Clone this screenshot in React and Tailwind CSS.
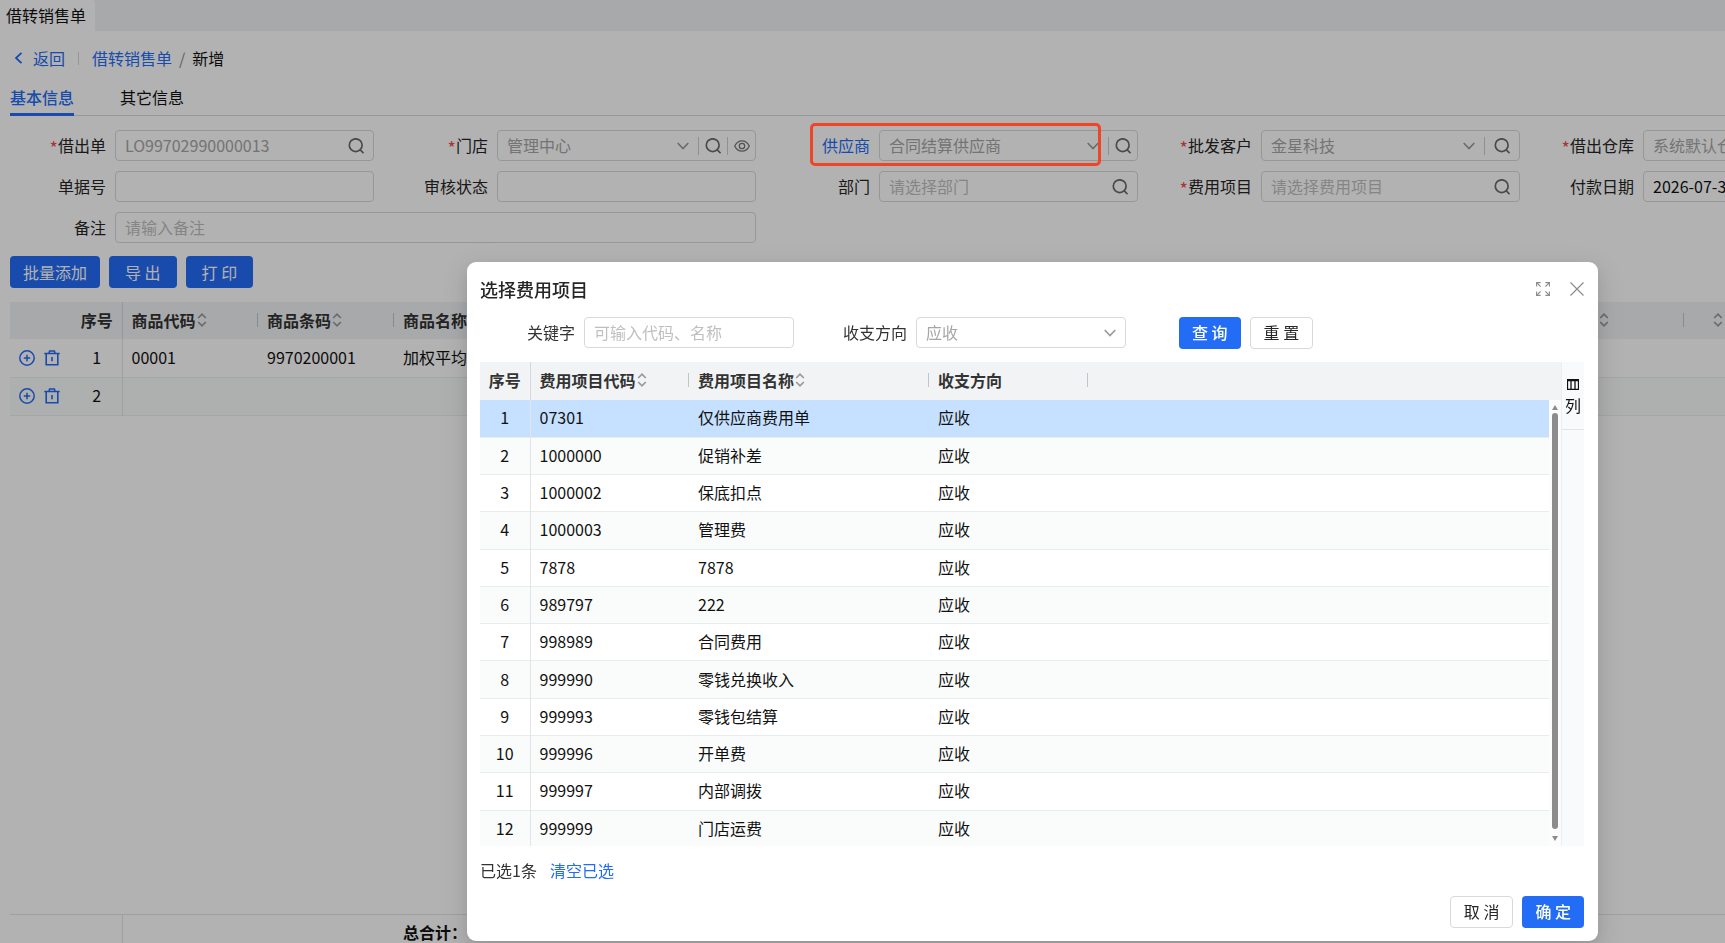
import React, { useState } from "react";

const feeItems = [
  { code: "07301", name: "仅供应商费用单" },
  { code: "1000000", name: "促销补差" },
  { code: "1000002", name: "保底扣点" },
  { code: "1000003", name: "管理费" },
  { code: "7878", name: "7878" },
  { code: "989797", name: "222" },
  { code: "998989", name: "合同费用" },
  { code: "999990", name: "零钱兑换收入" },
  { code: "999993", name: "零钱包结算" },
  { code: "999996", name: "开单费" },
  { code: "999997", name: "内部调拨" },
  { code: "999999", name: "门店运费" },
];

const goods = [
  { code: "00001", barcode: "9970200001", name: "加权平均" },
  { code: "", barcode: "", name: "" },
];

function SearchIcon() {
  return (
    <svg width="16" height="16" viewBox="0 0 16 16" fill="none" stroke="#6b6b6b" strokeWidth="1.7" className="shrink-0">
      <circle cx="7.7" cy="7.2" r="6.4" />
      <path d="M12 11.6L15.6 15.2" />
    </svg>
  );
}

function EyeIcon() {
  return (
    <svg width="16" height="16" viewBox="0 0 16 16" fill="none" stroke="#777777" strokeWidth="1.3" className="shrink-0">
      <path d="M0.7 8C2.3 4.6 4.9 2.8 8 2.8S13.7 4.6 15.3 8C13.7 11.4 11.1 13.2 8 13.2S2.3 11.4 0.7 8Z" />
      <circle cx="8" cy="8" r="2.7" />
    </svg>
  );
}

function DownIcon() {
  return (
    <svg width="12" height="8" viewBox="0 0 12 8" fill="none" stroke="#999999" strokeWidth="1.6" className="shrink-0">
      <path d="M0.7 1L6 6.6L11.3 1" />
    </svg>
  );
}

function SortIcon() {
  return (
    <svg width="10" height="14" viewBox="0 0 10 14" fill="none" stroke="#999999" strokeWidth="1.7" className="ml-px shrink-0">
      <path d="M1.2 5L5 1.2L8.8 5M1.2 9L5 12.8L8.8 9" />
    </svg>
  );
}

function Divider() {
  return <span className="h-[18px] w-px shrink-0 bg-[#cfcfcf]" />;
}

function Field({ id, label, required, active, className = "", children }) {
  return (
    <div className={`relative flex h-[31px] items-center pr-2 ${className}`}>
      <label
        htmlFor={id}
        className={`mr-[9px] flex w-[106px] shrink-0 justify-end pb-[2px] whitespace-nowrap ${active ? "text-[#236cf6]" : "text-[#262626]"}`}
      >
        {required && <span className="pt-1 text-[18px] leading-5 text-[#f5484d]">*</span>}
        {label}
      </label>
      {children}
    </div>
  );
}

const boxClass = "flex h-full min-w-0 flex-1 items-center rounded-[4px] border border-[#d9d9d9] pl-[9px]";
const inputClass = "h-full w-0 min-w-0 flex-1 bg-transparent pb-[2px] text-[#a6a6a6] outline-none placeholder:text-[#bfbfbf]";
const selectClass = "h-full w-0 min-w-0 flex-1 appearance-none bg-transparent pb-[2px] text-[#a6a6a6] outline-none";

function HeadCell({ text, sortable, separator = true, className = "pl-[9px]" }) {
  return (
    <th className="p-0 pb-[2px] text-left font-bold text-[#333333]">
      <div className="flex items-center justify-between">
        <span className={`flex items-center whitespace-nowrap ${className}`}>
          {text}
          {sortable && <SortIcon />}
        </span>
        {separator && <span className="h-[14px] w-px bg-[#c3c6d0]" />}
      </div>
    </th>
  );
}

function RowActions() {
  return (
    <div className="flex items-center gap-[9px] pl-[9px]">
      <button aria-label="添加行">
        <svg width="16" height="16" viewBox="0 0 16 16" fill="none" stroke="#236cf6" strokeWidth="1.5">
          <circle cx="8" cy="8" r="7.2" />
          <path d="M8 4.8V11.2M4.8 8H11.2" />
        </svg>
      </button>
      <button aria-label="删除行">
        <svg width="16" height="16" viewBox="0 0 16 16" fill="none" stroke="#236cf6" strokeWidth="1.6">
          <path d="M0.3 3.5H15.7M2.2 3.5V14.8H13.8V3.5M5 3.2L5.6 1H10.4L11 3.2M8 7V11.3" />
        </svg>
      </button>
    </div>
  );
}

function FeeItemModal() {
  const [keyword, setKeyword] = useState("");
  const [selected, setSelected] = useState(0);

  return (
    <div className="fixed inset-0 z-10 overflow-hidden bg-black/30 pt-[262px] pr-[127px] pl-[467px]">
      <div
        role="dialog"
        aria-label="选择费用项目"
        className="rounded-[9px] bg-white pr-[14px] pb-[13px] pl-[13px] shadow-[0_6px_16px_0_rgba(0,0,0,0.08),0_3px_6px_-4px_rgba(0,0,0,0.12),0_9px_28px_8px_rgba(0,0,0,0.08)]"
      >
        <div className="flex h-[55px] items-center justify-between pb-[2px]">
          <h2 className="text-[18px] font-medium text-[#262626]">选择费用项目</h2>
          <div className="flex items-center gap-5">
            <button aria-label="全屏">
              <svg width="14" height="14" viewBox="0 0 14 14" fill="none" stroke="#8c8c8c" strokeWidth="1.1">
                <path d="M0.6 4.6V0.6H4.6M9.4 0.6H13.4V4.6M13.4 9.4V13.4H9.4M4.6 13.4H0.6V9.4" />
                <path d="M1 1L4.6 4.6M13 1L9.4 4.6M13 13L9.4 9.4M1 13L4.6 9.4" />
              </svg>
            </button>
            <button aria-label="关闭">
              <svg width="14" height="14" viewBox="0 0 14 14" fill="none" stroke="#8c8c8c" strokeWidth="1.2">
                <path d="M0.5 0.5L13.5 13.5M13.5 0.5L0.5 13.5" />
              </svg>
            </button>
          </div>
        </div>

        {/* Filter */}
        <div className="flex h-[31px] items-center text-[#333333]">
          <label htmlFor="keyword" className="w-[104px] pr-[9px] pb-[2px] text-right">关键字</label>
          <input
            id="keyword"
            value={keyword}
            onChange={(e) => setKeyword(e.target.value)}
            placeholder="可输入代码、名称"
            className="h-full w-[210px] rounded-[4px] border border-[#d9d9d9] px-[9px] pb-[2px] outline-none placeholder:text-[#bfbfbf]"
          />
          <label htmlFor="direction" className="w-[122px] pr-[9px] pb-[2px] text-right">收支方向</label>
          <div className="flex h-full w-[210px] items-center rounded-[4px] border border-[#d9d9d9] pr-[9px] pl-[9px]">
            <select id="direction" className={selectClass}>
              <option>应收</option>
            </select>
            <DownIcon />
          </div>
          <button className="ml-[53px] h-8 rounded-[4px] bg-[#236cf6] px-[13px] pb-px font-medium text-white">查 询</button>
          <button className="ml-[9px] h-8 rounded-[4px] border border-[#d9d9d9] px-[13px] pb-px text-[#262626]">重 置</button>
        </div>

        {/* Fee item table */}
        <div className="mt-[14px] flex">
          <div className="relative h-[484px] min-w-0 flex-1 overflow-hidden">
            <table className="h-[486px] w-full table-fixed border-collapse">
              <colgroup>
                <col className="w-[50px]" />
                <col className="w-[159px]" />
                <col className="w-[240px]" />
                <col className="w-[159px]" />
                <col />
              </colgroup>
              <thead>
                <tr className="h-[38px] bg-[#f1f3f5]">
                  <th className="border-r border-[#d5d8de] p-0 pb-[2px] font-bold text-[#333333]">序号</th>
                  <HeadCell text="费用项目代码" sortable />
                  <HeadCell text="费用项目名称" sortable />
                  <HeadCell text="收支方向" />
                  <th />
                </tr>
              </thead>
              <tbody>
                {feeItems.map((item, index) => (
                  <tr
                    key={item.code}
                    onClick={() => setSelected(index)}
                    className={`h-[37px] border-b border-[#e9ecec] ${
                      selected === index ? "bg-[#c6e1ff]" : index % 2 === 1 ? "bg-[#fafcfb]" : "bg-white"
                    }`}
                  >
                    <td className="border-r border-[#e2e4e8] p-0 pb-[2px] text-center">{index + 1}</td>
                    <td className="p-0 pb-[2px] pl-[9px]">{item.code}</td>
                    <td className="p-0 pb-[2px] pl-[9px]">{item.name}</td>
                    <td className="p-0 pb-[2px] pl-[9px]">应收</td>
                    <td />
                  </tr>
                ))}
              </tbody>
            </table>
            {/* Scrollbar */}
            <div className="absolute top-[38px] right-0 bottom-0 flex w-3 flex-col items-center bg-[#fcfcfc] py-[5px]">
              <svg width="6" height="5" viewBox="0 0 6 5" fill="#8c8c8c">
                <path d="M3 0L6 5H0Z" />
              </svg>
              <div className="mt-[3px] w-[6px] flex-1 rounded-full bg-[#8c8c8c]" />
              <svg width="6" height="5" viewBox="0 0 6 5" fill="#8c8c8c" className="mt-[7px]">
                <path d="M3 5L6 0H0Z" />
              </svg>
            </div>
          </div>
          <div className="w-[23px] border-l border-[#eceef1] bg-[#f9fafc]">
            <button className="flex h-[68px] w-full flex-col items-center border-b border-[#e2e4e8] pt-[17px] leading-5">
              <svg width="12" height="11" viewBox="0 0 12 11" fill="none" stroke="#111111">
                <path d="M0.5 0.5H11.5V10.5H0.5ZM0 1.5H12M4 1V10.5M8 1V10.5" strokeWidth="1.3" />
              </svg>
              <span className="mt-[5px]">列</span>
            </button>
          </div>
        </div>

        <div className="flex h-[50px] items-center gap-[13px] pb-[2px] text-[#333333]">
          <span>已选1条</span>
          <button className="text-[#236cf6]">清空已选</button>
        </div>

        <div className="flex justify-end gap-[9px]">
          <button className="h-8 rounded-[4px] border border-[#d9d9d9] px-[13px] pb-[2px] text-[#262626]">取 消</button>
          <button className="h-8 rounded-[4px] bg-[#236cf6] px-[13px] pb-[2px] font-medium text-white">确 定</button>
        </div>
      </div>
    </div>
  );
}

function App() {
  return (
    <div className="flex h-screen flex-col overflow-hidden bg-white font-['Noto_Sans_CJK_SC',sans-serif] text-[16px] leading-6 text-[#111111]">
      {/* Window tabs */}
      <div className="flex h-[31px] shrink-0 bg-[#f1f3f5]">
        <div className="flex items-center rounded-tr-[3px] bg-white pr-[9px] pb-[2px] pl-[6px]">借转销售单</div>
      </div>

      {/* Breadcrumb */}
      <nav className="flex h-[54px] shrink-0 items-center pl-[14px]">
        <a href="#back" className="flex items-center gap-[10px] text-[#236cf6]">
          <svg width="9" height="12" viewBox="0 0 9 12" fill="none" stroke="currentColor" strokeWidth="1.8">
            <path d="M7.5 0.8L2 6L7.5 11.2" />
          </svg>
          返回
        </a>
        <span className="mx-[13px] h-[13px] w-px bg-[#d9d9d9]" />
        <a href="#list" className="text-[#236cf6]">借转销售单</a>
        <span className="mx-[7px] text-[#8c8c8c]">/</span>
        <span>新增</span>
      </nav>

      <div className="ml-[10px] flex h-[31px] shrink-0 gap-[46px] border-b border-[#d9d9d9]">
        <button className="h-[31px] border-b-[3px] border-[#236cf6] pb-1 font-medium text-[#236cf6]">基本信息</button>
        <button className="h-[31px] border-b-[3px] border-transparent pb-1">其它信息</button>
      </div>

      {/* Form */}
      <form className="mt-[14px] grid min-w-[1910px] shrink-0 grid-cols-5 gap-y-[10px]">
        <Field id="loan" label="借出单" required>
          <div className={`${boxClass} pr-[9px]`}>
            <input id="loan" readOnly value="LO99702990000013" className={inputClass} />
            <SearchIcon />
          </div>
        </Field>
        <Field id="store" label="门店" required>
          <div className={`${boxClass} pr-[5px]`}>
            <select id="store" className={selectClass}>
              <option>管理中心</option>
            </select>
            <div className="flex items-center gap-[6px]">
              <span className="mr-[3px] flex"><DownIcon /></span>
              <Divider />
              <SearchIcon />
              <Divider />
              <EyeIcon />
            </div>
          </div>
        </Field>
        <Field id="supplier" label="供应商" active>
          <div className={`${boxClass} pr-[6px]`}>
            <select id="supplier" className={selectClass}>
              <option>合同结算供应商</option>
            </select>
            <div className="flex items-center gap-[6px]">
              <span className="mr-[3px] flex"><DownIcon /></span>
              <Divider />
              <SearchIcon />
            </div>
          </div>
          <div className="pointer-events-none absolute -top-[7px] left-[46px] z-20 h-[43px] w-[291px] rounded-[5px] border-[3px] border-[#f04426]" />
        </Field>
        <Field id="customer" label="批发客户" required>
          <div className={`${boxClass} pr-[9px]`}>
            <select id="customer" className={selectClass}>
              <option>金星科技</option>
            </select>
            <div className="flex items-center gap-[9px]">
              <DownIcon />
              <Divider />
              <SearchIcon />
            </div>
          </div>
        </Field>
        <Field id="warehouse" label="借出仓库" required>
          <div className={boxClass}>
            <select id="warehouse" className={selectClass}>
              <option>系统默认仓库</option>
            </select>
          </div>
        </Field>

        <Field id="billNo" label="单据号">
          <div className={boxClass}>
            <input id="billNo" readOnly className={inputClass} />
          </div>
        </Field>
        <Field id="status" label="审核状态">
          <div className={boxClass}>
            <input id="status" readOnly className={inputClass} />
          </div>
        </Field>
        <Field id="dept" label="部门">
          <div className={`${boxClass} pr-[9px]`}>
            <input id="dept" placeholder="请选择部门" className={inputClass} />
            <SearchIcon />
          </div>
        </Field>
        <Field id="fee" label="费用项目" required>
          <div className={`${boxClass} pr-[9px]`}>
            <input id="fee" placeholder="请选择费用项目" className={inputClass} />
            <SearchIcon />
          </div>
        </Field>
        <Field id="payDate" label="付款日期">
          <div className={boxClass}>
            <input id="payDate" defaultValue="2026-07-31" className="h-full w-0 min-w-0 flex-1 bg-transparent pb-[2px] outline-none" />
          </div>
        </Field>

        <Field id="remark" label="备注" className="col-span-2">
          <div className={boxClass}>
            <input id="remark" placeholder="请输入备注" className={inputClass} />
          </div>
        </Field>
      </form>

      <div className="mt-[13px] flex shrink-0 gap-[9px] pl-[10px] text-white">
        <button className="h-8 rounded-[4px] bg-[#236cf6] px-[13px]">批量添加</button>
        <button className="h-8 rounded-[4px] bg-[#236cf6] px-4">导 出</button>
        <button className="h-8 rounded-[4px] bg-[#236cf6] px-4">打 印</button>
      </div>

      {/* Goods table */}
      <div className="mt-[14px] ml-[10px] min-h-0 flex-1 overflow-hidden">
        <table className="w-[1890px] table-fixed border-collapse">
          <colgroup>
            <col className="w-[62px]" />
            <col className="w-[50px]" />
            <col className="w-[136px]" />
            <col className="w-[136px]" />
            <col />
            <col className="w-[136px]" />
            <col className="w-[216px]" />
          </colgroup>
          <thead>
            <tr className="h-[37px] bg-[#f1f3f5]">
              <th />
              <th className="border-r border-[#d5d8de] p-0 pb-[2px] font-bold text-[#333333]">序号</th>
              <HeadCell text="商品代码" sortable />
              <HeadCell text="商品条码" sortable />
              <HeadCell text="商品名称" sortable />
              <HeadCell sortable className="pl-[50px]" />
              <HeadCell sortable className="pl-[28px]" separator={false} />
            </tr>
          </thead>
          <tbody>
            {goods.map((item, index) => (
              <tr key={index} className={`h-[38px] border-b border-[#eceeee] ${index % 2 === 1 ? "bg-[#fafbfb]" : ""}`}>
                <td className="p-0"><RowActions /></td>
                <td className="border-r border-[#e2e4e8] p-0 pb-[2px] text-center">{index + 1}</td>
                <td className="p-0 pb-[2px] pl-[9px]">{item.code}</td>
                <td className="p-0 pb-[2px] pl-[9px]">{item.barcode}</td>
                <td className="p-0 pb-[2px] pl-[9px]">{item.name}</td>
                <td />
                <td />
              </tr>
            ))}
          </tbody>
        </table>
      </div>
      <div className="ml-[10px] flex h-[29px] shrink-0 border-t border-[#e4e6e8] leading-[34px] font-bold">
        <span className="w-[113px] border-r border-[#e4e6e8]" />
        <span className="pl-[280px]">总合计：</span>
      </div>

      <FeeItemModal />
    </div>
  );
}

export default App;
